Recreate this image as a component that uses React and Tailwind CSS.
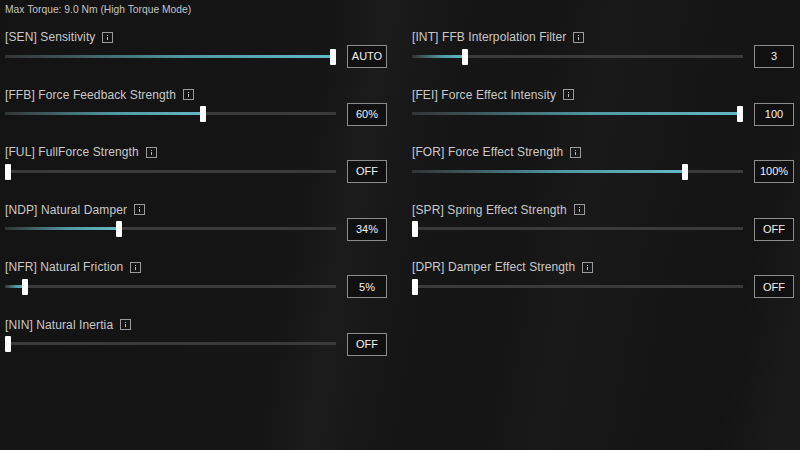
const left = [
  { code: "SEN", name: "Sensitivity", pct: 100, value: "AUTO" },
  { code: "FFB", name: "Force Feedback Strength", pct: 60, value: "60%" },
  { code: "FUL", name: "FullForce Strength", pct: 0, value: "OFF" },
  { code: "NDP", name: "Natural Damper", pct: 34, value: "34%" },
  { code: "NFR", name: "Natural Friction", pct: 5.2, value: "5%" },
  { code: "NIN", name: "Natural Inertia", pct: 0, value: "OFF" },
];

const right = [
  { code: "INT", name: "FFB Interpolation Filter", pct: 15.3, value: "3" },
  { code: "FEI", name: "Force Effect Intensity", pct: 100, value: "100" },
  { code: "FOR", name: "Force Effect Strength", pct: 83.2, value: "100%" },
  { code: "SPR", name: "Spring Effect Strength", pct: 0, value: "OFF" },
  { code: "DPR", name: "Damper Effect Strength", pct: 0, value: "OFF" },
];

const InfoIcon = () => (
  <span className="ml-[7px] w-[11px] h-[11px] border border-[#9a9a9a] flex flex-col items-center justify-center gap-[1px]">
    <span className="w-[1px] h-[1px] bg-[#bdbdbd]" />
    <span className="w-[1px] h-[3px] bg-[#bdbdbd]" />
  </span>
);

const Slider = ({ pct }) => {
  // thumb is 6px wide, so it travels 325px of the 331px track
  const left = (pct / 100) * 325;
  return (
    <div className="relative flex-1 h-[16px]">
      <div className="absolute left-[5px] right-0 top-[6px] h-[3px] bg-[#3a3a3a]" />
      <div
        className="absolute left-0 top-[6px] h-[3px] bg-[linear-gradient(90deg,#333_0%,#4f98a4_55%,#63b9c6_100%)]"
        style={{ width: left + 3 }}
      />
      <div
        className="absolute top-0 w-[6px] h-[16px] bg-white rounded-[1px]"
        style={{ left }}
      />
    </div>
  );
};

const Row = ({ code, name, pct, value }) => (
  <div className="h-[57.6px]">
    <div className="h-[18px] flex items-center text-[12px] text-[#c9c9c9] tracking-[0.1px]">
      <span>
        [{code}] {name}
      </span>
      <InfoIcon />
    </div>
    <div className="flex items-center gap-[11px] mt-[-1px] h-[23px]">
      <Slider pct={pct} />
      <div className="w-[40px] h-[23px] border border-[#8c8c8c] bg-[#101010] flex items-center justify-center text-[11px] text-[#f2f2f2]">
        {value}
      </div>
    </div>
  </div>
);

export default function App() {
  return (
    <div className="w-[800px] h-[450px] overflow-hidden bg-[#141414] bg-[linear-gradient(100deg,#131313_0%,#151515_38%,#1b1b1b_44%,#161616_52%,#141414_62%,#191919_70%,#161616_80%,#131313_90%,#1a1a1a_97%)] font-['Liberation_Sans',Arial,sans-serif]">
      <div className="h-[28px] pl-[5px] pt-[3px] text-[10.3px] leading-[14px] text-[#c4c4c4]">
        Max Torque: 9.0 Nm (High Torque Mode)
      </div>
      <div className="grid grid-cols-[407px_393px]">
        <div className="pl-[5px] w-[387px]">
          {left.map((r) => (
            <Row key={r.code} {...r} />
          ))}
        </div>
        <div className="pl-[5px] w-[387px]">
          {right.map((r) => (
            <Row key={r.code} {...r} />
          ))}
        </div>
      </div>
    </div>
  );
}
